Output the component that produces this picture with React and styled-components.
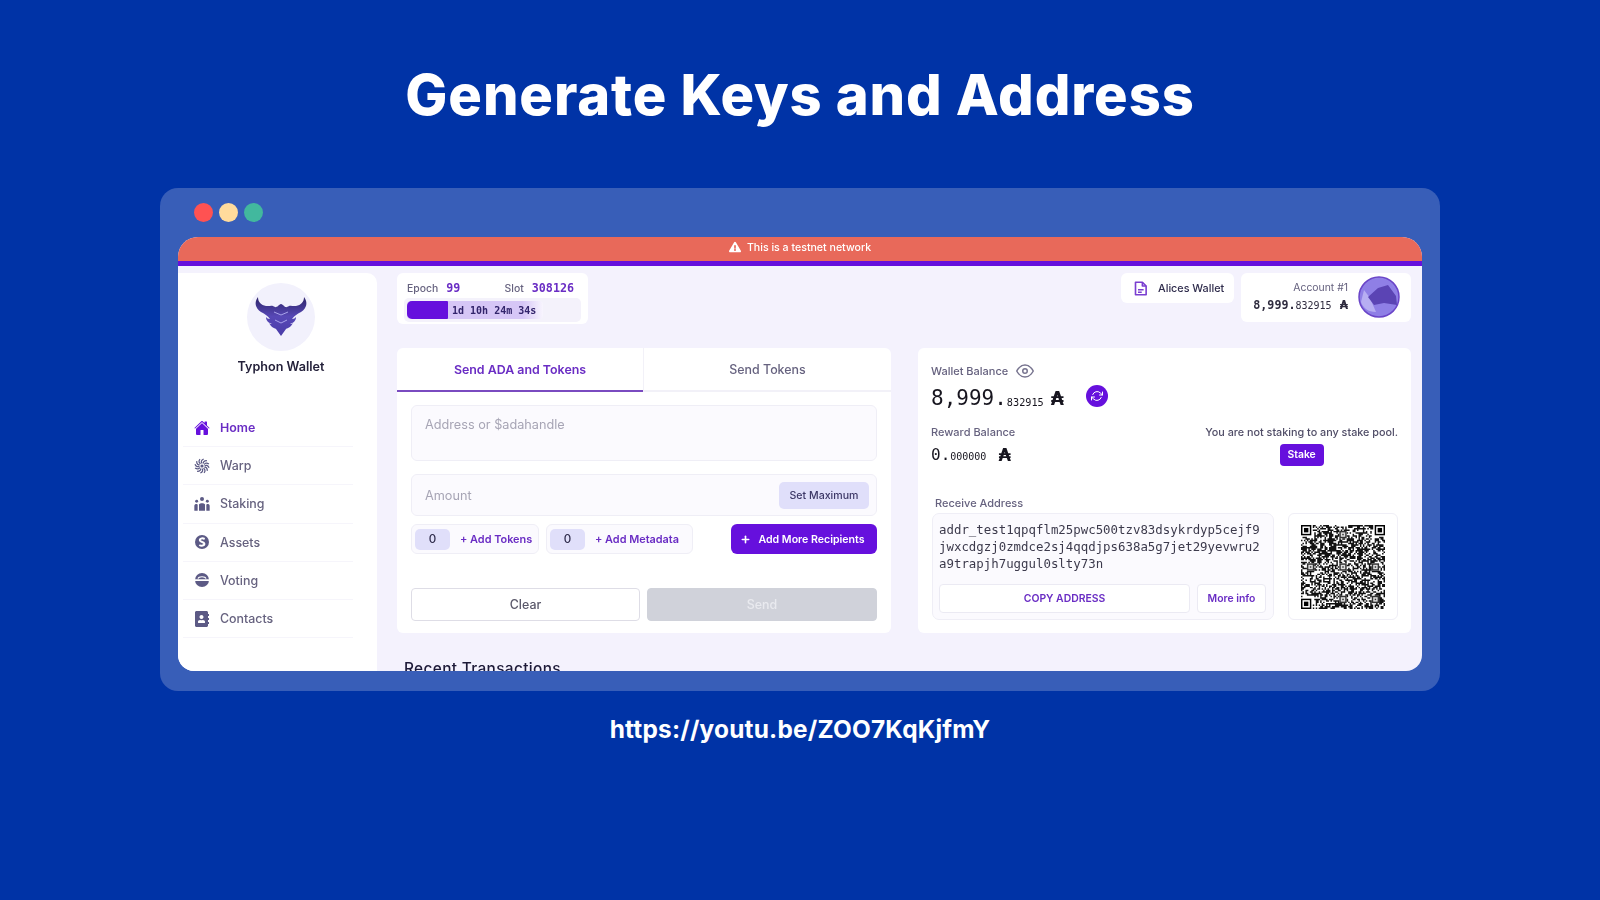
import React from 'react';
import styled, { createGlobalStyle } from 'styled-components';
import { FaAddressBook, FaExclamationTriangle } from 'react-icons/fa';
import { FiEye, FiRefreshCw, FiPlus } from 'react-icons/fi';
import { IoHome } from 'react-icons/io5';

const UI = `Inter, "Open Sans", sans-serif`;
const MONO = `"DejaVu Sans Mono", "Liberation Mono", monospace`;
const PURPLE = '#6610dd';
const PURPLE_TEXT = '#6a2dc4';
const MUTED = '#66627f';

const GlobalStyle = createGlobalStyle`
    html, body { margin: 0; padding: 0; background: #0033a6; }
    * { box-sizing: border-box; }
`;

const Page = styled.div`
    width: 1600px;
    height: 900px;
    background: #0033a6;
    display: flex;
    flex-direction: column;
    align-items: center;
    overflow: hidden;
`;
const Title = styled.h1`
    margin: 62px 0 0;
    height: 66px;
    color: #fff;
    font: 800 56px/66px Inter, sans-serif;
    letter-spacing: 0.9px;
`;
const Window = styled.div`
    margin-top: 60px;
    width: 1280px;
    height: 503px;
    background: #385eb8;
    border-radius: 18px;
    padding: 0 18px;
    display: flex;
    flex-direction: column;
`;
const Dots = styled.div`
    height: 49px;
    padding-left: 16px;
    display: flex;
    align-items: center;
    gap: 6px;
`;
const Dot = styled.span`
    width: 19px;
    height: 19px;
    border-radius: 50%;
    background: ${(p) => p.$color};
`;
const Screen = styled.div`
    height: 434px;
    border-radius: 20px 20px 16px 16px;
    background: #f4f2fd;
    overflow: hidden;
    font-family: ${UI};
    filter: blur(0.4px);
`;
const Banner = styled.div`
    height: 29px;
    padding-bottom: 4px;
    background: #e8695a;
    border-bottom: 5px solid ${PURPLE};
    display: flex;
    align-items: center;
    justify-content: center;
    gap: 6px;
    color: #fff;
    font-size: 10.6px;
    font-weight: 500;
    svg { font-size: 12px; }
`;
const Body = styled.div`
    display: flex;
    height: 405px;
`;
const Sidebar = styled.aside`
    width: 199px;
    margin-top: 7px;
    background: #fff;
    border-top-right-radius: 10px;
    padding: 10px 0 0 5px;
    display: flex;
    flex-direction: column;
`;
const Brand = styled.div`
    width: 196px;
    display: flex;
    flex-direction: column;
    align-items: center;
`;
const LogoDisc = styled.div`
    width: 68px;
    height: 68px;
    border-radius: 50%;
    background: #f2f1fc;
    display: flex;
    align-items: center;
    justify-content: center;
`;
const BrandName = styled.div`
    margin-top: 8px;
    font-size: 12.6px;
    line-height: 16px;
    font-weight: 600;
    color: #24213a;
`;
const Nav = styled.nav`
    margin-top: 34px;
    width: 170px;
`;
const NavRow = styled.div`
    height: 38.2px;
    padding-left: 11px;
    border-bottom: 1px solid #f6f5fb;
    display: flex;
    align-items: center;
    gap: 10px;
    font-size: 12.4px;
    font-weight: ${(p) => (p.$active ? 600 : 500)};
    color: ${(p) => (p.$active ? PURPLE_TEXT : MUTED)};
    svg { width: 16px; height: 16px; color: ${(p) => (p.$active ? PURPLE : '#5c5a85')}; flex: none; }
`;
const Main = styled.main`
    flex: 1;
    padding: 7px 11px 0 20px;
`;
const TopRow = styled.div`
    height: 51px;
    display: flex;
    align-items: flex-start;
    gap: 7px;
`;
const Tile = styled.div`
    background: #fff;
    border-radius: 6px;
`;
const EpochTile = styled(Tile)`
    width: 191px;
    height: 51px;
    margin-right: auto;
    padding: 6px 7px 0;
`;
const EpochLine = styled.div`
    height: 18px;
    padding: 0 7px 0 3px;
    display: flex;
    align-items: center;
    font-size: 10.4px;
    color: ${MUTED};
    font-weight: 500;
`;
const EpochValue = styled.span`
    font: 700 11.7px ${MONO};
    color: ${PURPLE_TEXT};
    margin-left: 8px;
    margin-right: ${(p) => (p.$grow ? 'auto' : 0)};
`;
const Track = styled.div`
    height: 24px;
    margin-top: 1px;
    padding: 3px;
    background: #f4f2fb;
    border-radius: 5px;
`;
const Progress = styled.div`
    width: 136px;
    height: 18px;
    background: linear-gradient(90deg, #d6c6f6 85%, #f8f5fe);
    border-radius: 4px;
    display: flex;
    align-items: center;
    font: 700 10px ${MONO};
    color: #32246b;
`;
const ProgressFill = styled.div`
    width: 41px;
    height: 18px;
    margin-right: 4px;
    background: ${PURPLE};
    border-radius: 5px 1px 1px 5px;
`;
const WalletTile = styled(Tile)`
    width: 113px;
    height: 30px;
    padding-left: 12px;
    display: flex;
    align-items: center;
    gap: 10px;
    font-size: 10.8px;
    font-weight: 500;
    color: #2f2c4c;
    svg { width: 15px; height: 15px; flex: none; }
`;
const AccountTile = styled(Tile)`
    width: 170px;
    height: 49px;
    padding: 8px 11px 0 0;
    display: flex;
    justify-content: flex-end;
    gap: 10px;
`;
const AccountText = styled.div`
    display: flex;
    flex-direction: column;
    align-items: flex-end;
    gap: 3px;
    font-size: 10.4px;
    color: ${MUTED};
    line-height: 13px;
`;
const AccountAmount = styled.div`
    font: 700 11.7px/16px ${MONO};
    color: #2f2c3f;
    small { font-size: 10px; font-weight: 400; }
`;
const Ada = styled.span`
    font-family: "DejaVu Sans", sans-serif;
    font-weight: 700;
    font-size: ${(p) => p.$size}px;
    margin-left: ${(p) => p.$gap}px;
`;
const Avatar = styled.svg`
    width: 42px;
    height: 42px;
    flex: none;
    margin-top: -5px;
`;
const Cards = styled.div`
    margin-top: 24px;
    display: grid;
    grid-template-columns: 494px 493px;
    gap: 27px;
`;
const Card = styled.section`
    height: 285px;
    background: #fff;
    border-radius: 6px;
    overflow: hidden;
`;
const Tabs = styled.div`
    height: 44px;
    display: grid;
    grid-template-columns: 246px 1fr;
`;
const TabButton = styled.div`
    display: flex;
    align-items: center;
    justify-content: center;
    font-size: 12.4px;
    font-weight: ${(p) => (p.$active ? 600 : 500)};
    color: ${(p) => (p.$active ? PURPLE_TEXT : '#66627f')};
    border-bottom: ${(p) => (p.$active ? '2px solid #7a4bc0' : '2px solid #f2f1f8')};
    border-left: ${(p) => (p.$active ? 'none' : '1px solid #f2f1f8')};
`;
const SendBody = styled.div`
    padding: 13px 14px 0;
`;
const Field = styled.div`
    height: ${(p) => p.$height}px;
    margin-bottom: 13px;
    padding: ${(p) => (p.$center ? '0 7px 0 13px' : '11px 13px 0')};
    background: #fbfafe;
    border: 1px solid #efeef6;
    border-radius: 6px;
    font-size: 12.7px;
    color: #a7a5b5;
    display: flex;
    align-items: ${(p) => (p.$center ? 'center' : 'flex-start')};
    justify-content: space-between;
`;
const SetMax = styled.div`
    width: 90px;
    height: 27px;
    background: #e0dffa;
    border-radius: 5px;
    display: flex;
    align-items: center;
    justify-content: center;
    color: #3c3766;
    font-size: 10.6px;
    font-weight: 500;
`;
const AddRow = styled.div`
    margin-top: -5px;
    display: flex;
    gap: 7px;
`;
const Chip = styled.div`
    width: ${(p) => p.$width}px;
    height: 30px;
    padding: 0 3px;
    background: #fbfafe;
    border: 1px solid #efeef6;
    border-radius: 6px;
    display: flex;
    align-items: center;
    gap: 10px;
    font-size: 10.9px;
    font-weight: 600;
    color: ${PURPLE_TEXT};
    white-space: nowrap;
`;
const Count = styled.span`
    width: 35px;
    height: 21px;
    border-radius: 5px;
    background: #e0dffa;
    color: #2f2c4c;
    font-size: 11.6px;
    font-weight: 500;
    display: flex;
    align-items: center;
    justify-content: center;
`;
const PrimaryButton = styled.div`
    margin-left: auto;
    width: 146px;
    height: 30px;
    padding-right: 3px;
    background: ${PURPLE};
    border-radius: 6px;
    color: #fff;
    font-size: 10.6px;
    font-weight: 600;
    display: flex;
    align-items: center;
    justify-content: center;
    gap: 7px;
    svg { stroke-width: 3.5; font-size: 11px; }
`;
const Actions = styled.div`
    margin-top: 34px;
    display: grid;
    grid-template-columns: 229px 230px;
    gap: 7px;
`;
const ActionButton = styled.div`
    height: 33px;
    border-radius: 4px;
    display: flex;
    align-items: center;
    justify-content: center;
    font-size: 12.4px;
    font-weight: 500;
    color: ${(p) => (p.$disabled ? '#e9eaef' : '#5a586a')};
    background: ${(p) => (p.$disabled ? '#d0d2da' : '#fff')};
    border: 1px solid ${(p) => (p.$disabled ? '#d0d2da' : '#dedde6')};
`;
const BalanceBody = styled.div`
    padding: 15px 13px 0;
`;
const Label = styled.div`
    margin-top: -1px;
    font-size: 11px;
    line-height: 16px;
    font-weight: 500;
    color: ${MUTED};
    display: flex;
    align-items: center;
    gap: 8px;
    svg { width: 18px; height: 18px; color: #77748f; }
`;
const BalanceRow = styled.div`
    margin-top: 5px;
    height: 26px;
    display: flex;
    align-items: center;
    font-family: ${MONO};
    font-size: 21px;
    color: #17151f;
`;
const Decimals = styled.small`
    font-size: ${(p) => p.$size}px;
    align-self: flex-end;
    padding-bottom: 3px;
`;
const Refresh = styled.div`
    width: 22px;
    height: 22px;
    margin: -4px 0 0 22px;
    border-radius: 50%;
    background: ${PURPLE};
    color: #fff;
    display: flex;
    align-items: center;
    justify-content: center;
    font-size: 12px;
`;
const RewardRow = styled.div`
    margin-top: 14px;
    height: 70px;
    display: flex;
    justify-content: space-between;
`;
const StakeBox = styled.div`
    display: flex;
    flex-direction: column;
    align-items: center;
    gap: 3px;
    font-size: 10.8px;
    line-height: 16px;
    color: #4f4c66;
    font-weight: 500;
`;
const StakeButton = styled.div`
    width: 44px;
    height: 22px;
    border-radius: 4px;
    background: ${PURPLE};
    color: #fff;
    display: flex;
    align-items: center;
    justify-content: center;
    font-size: 10.4px;
    font-weight: 600;
`;
const RewardAmount = styled(BalanceRow)`
    font-size: 16px;
    margin-top: 3px;
    height: 22px;
`;
const ReceiveLabel = styled(Label)`
    margin: 0 0 2px 4px;
`;
const ReceiveRow = styled.div`
    display: grid;
    grid-template-columns: 342px 110px;
    justify-content: space-between;
    margin-left: 1px;
`;
const AddressBox = styled.div`
    height: 107px;
    padding: 7px 7px 0 6px;
    background: #fbfafe;
    border: 1px solid #efeef6;
    border-radius: 7px;
`;
const AddressText = styled.div`
    font: 12.4px/17px ${MONO};
    color: #3c3a4c;
    word-break: break-all;
    height: 63px;
`;
const AddressActions = styled.div`
    display: grid;
    grid-template-columns: 251px 69px;
    gap: 7px;
`;
const GhostButton = styled.div`
    height: 29px;
    background: #fff;
    border: 1px solid #ebeaf3;
    border-radius: 4px;
    display: flex;
    align-items: center;
    justify-content: center;
    font-size: 10.4px;
    font-weight: 600;
    color: ${PURPLE_TEXT};
`;
const QrBox = styled.div`
    height: 107px;
    background: #fff;
    border: 1px solid #efeef6;
    border-radius: 6px;
    display: flex;
    align-items: center;
    justify-content: center;
    svg { filter: blur(0.35px); }
`;
const RecentTitle = styled.h2`
    margin: 26px 0 0 7px;
    font-size: 15.4px;
    line-height: 20px;
    font-weight: 500;
    letter-spacing: 0.35px;
    color: #1d1a38;
`;
const Link = styled.div`
    margin-top: 23px;
    color: #fff;
    font: 700 24.4px/30px Inter, sans-serif;
    letter-spacing: 0.2px;
`;

const Logo = () => (
    <svg width="54" height="40" viewBox="0 0 54 40">
        <defs>
            <linearGradient id="horn" x1="0" y1="0" x2="0" y2="1">
                <stop offset="0" stopColor="#2d2468" />
                <stop offset="0.5" stopColor="#5748b6" />
                <stop offset="1" stopColor="#4a3ca8" />
            </linearGradient>
        </defs>
        <path
            fill="url(#horn)"
            d="M4 0 C4 5 7 8 12 9 C15 9.5 17 8 19 9 C21 10 22 11 24 9 C25 8 26 7 27 7 C28 7 29 8 30 9 C32 11 33 10 35 9 C37 8 39 9.5 42 9 C47 8 50 5 50 0 C54 5 53 11 47 15 C43 17 40 19 38 22 C40 22 41 21 42 20 C42 24 39 26 36 27 C37 27 38 27 39 26 C37 30 34 31 32 32 L27 39 L22 32 C20 31 17 30 15 26 C16 27 17 27 18 27 C15 26 12 24 12 20 C13 21 14 22 16 22 C14 19 11 17 7 15 C1 11 0 5 4 0 Z"
        />
        <path fill="none" stroke="#a9a2ea" strokeWidth="1" d="M20 15 L27 18 L34 15 M21 23 L27 26 L33 23" />
    </svg>
);

const WarpIcon = () => (
    <svg viewBox="0 0 24 24" fill="none" stroke="currentColor" strokeWidth="1.9">
        {[0, 30, 60, 90, 120, 150, 180, 210, 240, 270, 300, 330].map((a) => (
            <path key={a} transform={`rotate(${a} 12 12)`} d="M12 8 C10 6 11 3 14.5 1.5" />
        ))}
        <circle cx="12" cy="12" r="2.4" fill="currentColor" stroke="none" />
    </svg>
);
// three heads over three bodies, the middle one higher
const StakingIcon = () => (
    <svg viewBox="0 0 24 24" fill="currentColor">
        <circle cx="12" cy="4.5" r="3" />
        <circle cx="4" cy="8" r="2.2" />
        <circle cx="20" cy="8" r="2.2" />
        <path d="M7.5 22 V13 C7.5 10 16.5 10 16.5 13 V22 Z" />
        <path d="M0.5 22 V15 C0.5 11.5 5.5 11.5 5.5 13.5 V22 Z" />
        <path d="M23.5 22 V15 C23.5 11.5 18.5 11.5 18.5 13.5 V22 Z" />
    </svg>
);
const AssetsIcon = () => (
    <svg viewBox="0 0 24 24">
        <circle cx="12" cy="12" r="10.5" fill="currentColor" />
        <path fill="none" stroke="#fff" strokeWidth="3" d="M16 7.5 C12 5.5 8 7 9 10 C10 12.5 15 11.5 15.5 14.5 C16 17.5 11 18.5 8 16.5" />
    </svg>
);
const VotingIcon = () => (
    <svg viewBox="0 0 24 24">
        <circle cx="12" cy="12" r="10.5" fill="currentColor" />
        <path fill="#fff" d="M1 11 H23 V13.5 H1 Z" />
        <path fill="none" stroke="#fff" strokeWidth="1.6" d="M6 10 C7 6 17 6 18 10" />
    </svg>
);
const DocIcon = () => (
    <svg viewBox="0 0 24 24" fill="none" stroke="#7a3fd0" strokeWidth="2.6" strokeLinejoin="round">
        <path d="M4 2 H15 L21 8 V22 H4 Z" />
        <path d="M15 2 V8 H21" />
        <path d="M8 14 H17 M8 18 H14" strokeWidth="2.2" />
    </svg>
);

const QR_SIZE = 57;
const ALIGN = [6, 28, 50];
const isFinder = (x, y, ox, oy) => x >= ox - 1 && x <= ox + 7 && y >= oy - 1 && y <= oy + 7;
const isAlign = (x, y) => ALIGN.some((a) => ALIGN.some((b) => Math.abs(x - a) <= 2 && Math.abs(y - b) <= 2));
const qrModules = () => {
    let seed = 73;
    const cells = [];
    for (let y = 0; y < QR_SIZE; y += 1) {
        for (let x = 0; x < QR_SIZE; x += 1) {
            seed = (seed * 1103515245 + 12345) & 0x7fffffff;
            const skip = isFinder(x, y, 0, 0) || isFinder(x, y, QR_SIZE - 7, 0) || isFinder(x, y, 0, QR_SIZE - 7) || isAlign(x, y);
            if (!skip && (seed >> 16) % 100 < 54) cells.push(`M${x} ${y}h1v1h-1z`);
        }
    }
    return cells.join('');
};
const QR_PATH = qrModules();
const Finder = ({ x, y }) => (
    <g>
        <rect x={x} y={y} width="7" height="7" fill="#000" />
        <rect x={x + 1} y={y + 1} width="5" height="5" fill="#fff" />
        <rect x={x + 2} y={y + 2} width="3" height="3" fill="#000" />
    </g>
);
const AlignMark = ({ x, y }) => (
    <g>
        <rect x={x - 2} y={y - 2} width="5" height="5" fill="#333" />
        <rect x={x - 1} y={y - 1} width="3" height="3" fill="#ddd" />
        <rect x={x} y={y} width="1" height="1" fill="#333" />
    </g>
);
const QrCode = () => (
    <svg width="84" height="84" viewBox={`0 0 ${QR_SIZE} ${QR_SIZE}`}>
        <path d={QR_PATH} fill="#111" />
        {ALIGN.map((a) =>
            ALIGN.filter((b) => !((a === 6 && b === 6) || (a === 6 && b === 50) || (a === 50 && b === 6))).map((b) => (
                <AlignMark key={`${a}-${b}`} x={a} y={b} />
            )),
        )}
        <Finder x={0} y={0} />
        <Finder x={QR_SIZE - 7} y={0} />
        <Finder x={0} y={QR_SIZE - 7} />
    </svg>
);

const navItems = [
    { label: 'Home', icon: <IoHome />, active: true },
    { label: 'Warp', icon: <WarpIcon /> },
    { label: 'Staking', icon: <StakingIcon /> },
    { label: 'Assets', icon: <AssetsIcon /> },
    { label: 'Voting', icon: <VotingIcon /> },
    { label: 'Contacts', icon: <FaAddressBook /> },
];

export default function App() {
    return (
        <Page>
            <GlobalStyle />
            <Title>Generate Keys and Address</Title>
            <Window>
                <Dots>
                    <Dot $color="#ff5252" />
                    <Dot $color="#ffdb9c" />
                    <Dot $color="#42b89e" />
                </Dots>
                <Screen>
                    <Banner>
                        <FaExclamationTriangle />
                        This is a testnet network
                    </Banner>
                    <Body>
                        <Sidebar>
                            <Brand>
                                <LogoDisc>
                                    <Logo />
                                </LogoDisc>
                                <BrandName>Typhon Wallet</BrandName>
                            </Brand>
                            <Nav>
                                {navItems.map((item) => (
                                    <NavRow key={item.label} $active={item.active}>
                                        {item.icon}
                                        {item.label}
                                    </NavRow>
                                ))}
                            </Nav>
                        </Sidebar>
                        <Main>
                            <TopRow>
                                <EpochTile>
                                    <EpochLine>
                                        Epoch <EpochValue $grow>99</EpochValue>
                                        Slot <EpochValue>308126</EpochValue>
                                    </EpochLine>
                                    <Track>
                                        <Progress>
                                            <ProgressFill />
                                            1d 10h 24m 34s
                                        </Progress>
                                    </Track>
                                </EpochTile>
                                <WalletTile>
                                    <DocIcon />
                                    Alices Wallet
                                </WalletTile>
                                <AccountTile>
                                    <AccountText>
                                        Account #1
                                        <AccountAmount>
                                            8,999.<small>832915</small>
                                            <Ada $size={12} $gap={8}>₳</Ada>
                                        </AccountAmount>
                                    </AccountText>
                                    <Avatar viewBox="0 0 42 42">
                                        <circle cx="21" cy="21" r="20" fill="#8f7fe6" stroke="#6a45c8" strokeWidth="1.5" />
                                        <path fill="#b7aef2" d="M3 26 L6 14 L12 22 L18 36 C10 36 5 32 3 26 Z" />
                                        <path fill="#5b44b4" d="M10 21 L20 12 L30 9 L38 20 L39 29 L26 27 L16 29 Z" />
                                    </Avatar>
                                </AccountTile>
                            </TopRow>
                            <Cards>
                                <Card>
                                    <Tabs>
                                        <TabButton $active>Send ADA and Tokens</TabButton>
                                        <TabButton>Send Tokens</TabButton>
                                    </Tabs>
                                    <SendBody>
                                        <Field $height={56}>Address or $adahandle</Field>
                                        <Field $height={42} $center>
                                            Amount
                                            <SetMax>Set Maximum</SetMax>
                                        </Field>
                                        <AddRow>
                                            <Chip $width={128}>
                                                <Count>0</Count>+ Add Tokens
                                            </Chip>
                                            <Chip $width={147}>
                                                <Count>0</Count>+ Add Metadata
                                            </Chip>
                                            <PrimaryButton>
                                                <FiPlus />
                                                Add More Recipients
                                            </PrimaryButton>
                                        </AddRow>
                                        <Actions>
                                            <ActionButton>Clear</ActionButton>
                                            <ActionButton $disabled>Send</ActionButton>
                                        </Actions>
                                    </SendBody>
                                </Card>
                                <Card>
                                    <BalanceBody>
                                        <Label>
                                            Wallet Balance <FiEye />
                                        </Label>
                                        <BalanceRow>
                                            8,999.<Decimals $size={10.2}>832915</Decimals>
                                            <Ada $size={19} $gap={7}>₳</Ada>
                                            <Refresh>
                                                <FiRefreshCw />
                                            </Refresh>
                                        </BalanceRow>
                                        <RewardRow>
                                            <div>
                                                <Label>Reward Balance</Label>
                                                <RewardAmount>
                                                    0.<Decimals $size={10}>000000</Decimals>
                                                    <Ada $size={18} $gap={12}>₳</Ada>
                                                </RewardAmount>
                                            </div>
                                            <StakeBox>
                                                You are not staking to any stake pool.
                                                <StakeButton>Stake</StakeButton>
                                            </StakeBox>
                                        </RewardRow>
                                        <ReceiveLabel>Receive Address</ReceiveLabel>
                                        <ReceiveRow>
                                            <AddressBox>
                                                <AddressText>
                                                    addr_test1qpqflm25pwc500tzv83dsykrdyp5cejf9jwxcdgzj0zmdce2sj4qqdjps638a5g7jet29yevwru2a9trapjh7uggul0slty73n
                                                </AddressText>
                                                <AddressActions>
                                                    <GhostButton>COPY ADDRESS</GhostButton>
                                                    <GhostButton>More info</GhostButton>
                                                </AddressActions>
                                            </AddressBox>
                                            <QrBox>
                                                <QrCode />
                                            </QrBox>
                                        </ReceiveRow>
                                    </BalanceBody>
                                </Card>
                            </Cards>
                            <RecentTitle>Recent Transactions</RecentTitle>
                        </Main>
                    </Body>
                </Screen>
            </Window>
            <Link>https://youtu.be/ZOO7KqKjfmY</Link>
        </Page>
    );
}
